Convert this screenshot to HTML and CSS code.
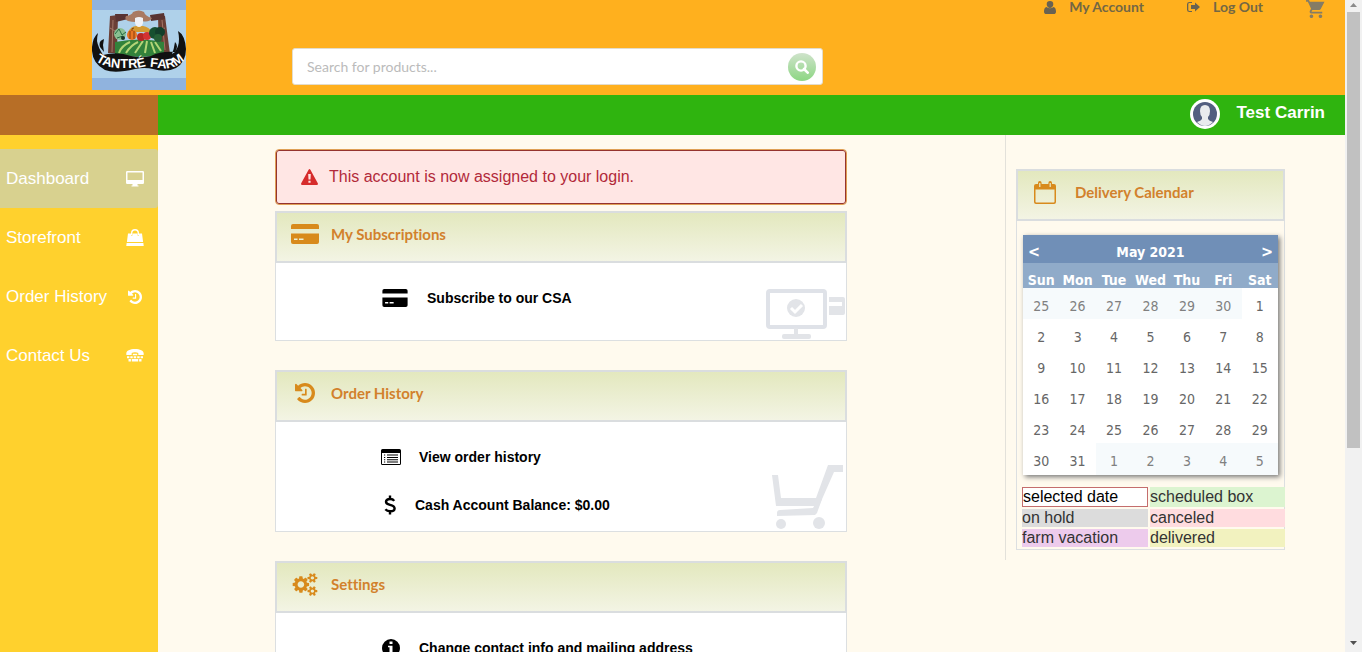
FILE: index.html
```html
<!DOCTYPE html>
<html lang="en">
<head>
	<meta charset="utf-8">
	<title>Tantre Farm - Dashboard</title>
	<link rel="stylesheet" href="styles.css">
</head>
<body>
	<svg class="sprite" aria-hidden="true">
		<symbol id="i-user" viewBox="0 0 12 13"><path d="M6 0a3.300 3.300 0 0 1 3.300 3.300C9.300 5.300 7.900 7 6 7S2.700 5.300 2.700 3.300A3.300 3.300 0 0 1 6 0zM2.600 6a4.900 4.900 0 0 0 6.800 0C11.300 6.300 12 8.300 12 10.700 12 12.200 11 13 9.700 13H2.300C1 13 0 12.200 0 10.700 0 8.300.7 6.300 2.600 6z"/></symbol>
		<symbol id="i-logout" viewBox="0 0 13 12"><path d="M5 1v1H2.500Q1.300 2 1.300 3.200v5.600Q1.300 10 2.500 10H5v1H2.500Q0 11 0 8.800V3.200Q0 1 2.500 1zM8 1.500 13 6 8 10.500V8H4V4h4z"/></symbol>
		<symbol id="i-cart" viewBox="1 2 21 20"><path d="M7 18c-1.100 0-1.990.9-1.990 2S5.900 22 7 22s2-.9 2-2-.9-2-2-2zM1 2v2h2l3.600 7.590-1.350 2.450c-.16.28-.25.61-.25.96 0 1.100.9 2 2 2h12v-2H7.420c-.14 0-.25-.11-.25-.25l.03-.12.9-1.630h7.450c.75 0 1.410-.41 1.750-1.030L21.500 4H5.210l-.94-2H1zm16 16c-1.100 0-1.990.9-1.990 2s.89 2 1.990 2 2-.9 2-2-.9-2-2-2z"/></symbol>
		<symbol id="i-search" viewBox="0 0 14 14"><path d="m9 9 3.700 3.700" stroke="#fff" stroke-width="2.600" stroke-linecap="round"/><circle cx="6" cy="6" r="4.600" fill="none" stroke="#fff" stroke-width="2.400"/></symbol>
		<symbol id="i-desktop" viewBox="0 0 18 16"><path fill-rule="evenodd" d="M1.200 0h15.600Q18 0 18 1.200v10.600q0 1.200-1.200 1.200H11.500v1.400h1V15.500h-7V14.400h1V13H1.200Q0 13 0 11.800V1.200Q0 0 1.200 0zM1.500 1.500v7.500h15V1.500z"/></symbol>
		<symbol id="i-bag" viewBox="0 0 18 17"><path d="M5.700 6V4a3.300 3.300 0 0 1 6.600 0v2" fill="none" stroke="#fff" stroke-width="1.400"/><path d="M2 4.500h3v2h1.500v-2h5v2H13v-2h3l1.100 8.500H.9zM.6 14h16.800l.3 3H.3z"/></symbol>
		<symbol id="i-history" viewBox="0 128 1536 1536"><path d="M1536 896q0 156-61 298t-164 245-245 164-298 61q-172 0-327-72.500t-264-204.500q-7-10-6.500-22.500t8.500-20.500l137-138q10-9 25-9 16 2 23 12 73 95 179 147t225 52q104 0 198.500-40.500t163.500-109.500 109.500-163.500 40.500-198.500-40.500-198.500-109.500-163.500-163.500-109.500-198.500-40.500q-98 0-188 35.500t-160 101.500l137 138q31 30 14 69-17 40-59 40h-448q-26 0-45-19t-19-45v-448q0-42 40-59 39-17 69 14l130 129q107-101 244.500-156.500t284.500-55.500q156 0 298 61t245 164 164 245 61 298zM896 608v448q0 14-9 23t-23 9h-320q-14 0-23-9t-9-23v-64q0-14 9-23t23-9h224v-352q0-14 9-23t23-9h64q14 0 23 9t9 23z"/></symbol>
		<symbol id="i-tty" viewBox="0 0 18 13"><path d="M.3 4.500C.3 1.500 4 0 9 0s8.700 1.500 8.700 4.500v1q0 .6-.7.600h-4q-.7 0-.7-.7V4Q11 3.300 9 3.300T5.700 4v1.400q0 .7-.7.700H1Q.3 6.100.3 5.500z"/><path d="M1 7.200h2.400v2H1zm3.300 0h2.400v2H4.300zm3.400 0h2.500v2H7.700zm3.500 0h2.500v2h-2.500zm3.400 0H17v2h-2.400zM2.500 10h2.400v2.600H2.500zm3.300 0h6.400v2.600H5.800zm7.300 0h2.400v2.600h-2.400zM6.800 4.700h4.400v1.500H6.800z"/></symbol>
		<symbol id="i-warning" viewBox="0 0 17 16"><path fill-rule="evenodd" d="M7.600.7q.9-1.200 1.800 0l7.400 13.500q.6 1.500-1 1.800H1.200q-1.600-.3-1-1.800zM7.200 5l.3 5.500h2L9.800 5zM7.400 11.700v2.100h2.200v-2.100z"/></symbol>
		<symbol id="i-card" viewBox="0 0 28 20"><path fill-rule="evenodd" d="M2 0h24q2 0 2 2v3H0V2q0-2 2-2zM0 9.500h28V18q0 2-2 2H2q-2 0-2-2zM3 14.500V16h3.500v-1.500zm5 0V16h4.500v-1.500z"/></symbol>
		<symbol id="i-list" viewBox="0 0 20 16"><path fill-rule="evenodd" d="M1.500 0h17Q20 0 20 1.500v13q0 1.500-1.500 1.500h-17Q0 16 0 14.500v-13Q0 0 1.500 0zM1 4v11h18V4z"/><path d="M3 5.500h1.200v1H3zm3 0h11v1H6zM3 8h1.200v1H3zm3 0h11v1H6zM3 10.300h1.200v1H3zm3 0h11v1H6zM3 12.600h1.200v1H3zm3 0h11v1H6z"/></symbol>
		<symbol id="i-dollar" viewBox="0 0 16 20"><path d="M13.200 5.800Q12 4 9 4 5 4 5 6.700q0 2.200 4 3.100 4.600 1 4.600 3.600T9.200 16.300q-3.200 0-4.800-2M9 .5V4M9 16v3.500" fill="none" stroke="#000" stroke-width="2.400"/></symbol>
		<symbol id="i-info" viewBox="0 0 18 18"><path fill-rule="evenodd" d="M9 0a9 9 0 1 1 0 18A9 9 0 0 1 9 0zM7.500 2.500v2.600h3V2.500zM6 6.700v1.600h1.500v4.800H6v1.700h6v-1.700h-1.500V6.700z"/></symbol>
		<symbol id="i-cogs" viewBox="0 0 1920 1792"><path d="M896 896q0-106-75-181t-181-75-181 75-75 181 75 181 181 75 181-75 75-181zM1664 1408q0-52-38-90t-90-38-90 38-38 90q0 53 37.500 90.500t90.500 37.500 90.500-37.500 37.500-90.500zM1664 384q0-52-38-90t-90-38-90 38-38 90q0 53 37.500 90.500t90.500 37.500 90.500-37.500 37.500-90.500zM1280 805v185q0 10-7 19.500t-16 10.500l-155 24q-11 35-32 76 34 48 90 115 7 11 7 20 0 12-7 19-23 30-82.500 89.500t-78.500 59.500q-11 0-21-7l-115-90q-37 19-77 31-11 108-23 155-7 24-30 24h-186q-11 0-20-7.500t-10-17.500l-23-153q-34-10-75-31l-118 89q-7 7-20 7-11 0-21-8-144-133-144-160 0-9 7-19 10-14 41-53t47-61q-23-44-35-82l-152-24q-10-1-17-9.500t-7-19.500v-185q0-10 7-19.500t16-10.500l155-24q11-35 32-76-34-48-90-115-7-11-7-20 0-12 7-20 22-30 82-89t79-59q11 0 21 7l115 90q34-18 77-32 11-108 23-154 7-24 30-24h186q11 0 20 7.500t10 17.500l23 153q34 10 75 31l118-89q8-7 20-7 11 0 21 8 144 133 144 160 0 8-7 19-12 16-42 54t-45 60q23 48 34 82l152 23q10 2 17 10.500t7 19.500zM1920 1338v140q0 16-149 31-12 27-30 52 51 113 51 138 0 4-4 7-122 71-124 71-8 0-46-47t-52-68q-20 2-30 2t-30-2q-14 21-52 68t-46 47q-2 0-124-71-4-3-4-7 0-25 51-138-18-25-30-52-149-15-149-31v-140q0-16 149-31 13-29 30-52-51-113-51-138 0-4 4-7 4-2 35-20t59-34 30-16q8 0 46 46.500t52 67.500q20-2 30-2t30 2q51-71 92-112l6-2q4 0 124 70 4 3 4 7 0 25-51 138 17 23 30 52 149 15 149 31zM1920 314v140q0 16-149 31-12 27-30 52 51 113 51 138 0 4-4 7-122 71-124 71-8 0-46-47t-52-68q-20 2-30 2t-30-2q-14 21-52 68t-46 47q-2 0-124-71-4-3-4-7 0-25 51-138-18-25-30-52-149-15-149-31v-140q0-16 149-31 13-29 30-52-51-113-51-138 0-4 4-7 4-2 35-20t59-34 30-16q8 0 46 46.500t52 67.500q20-2 30-2t30 2q51-71 92-112l6-2q4 0 124 70 4 3 4 7 0 25-51 138 17 23 30 52 149 15 149 31z"/></symbol>
		<symbol id="i-calendar" viewBox="0 0 22 23"><path fill-rule="evenodd" d="M2 3h2V2q0-2 1.800-2T7.600 2v1h6.800V2q0-2 1.800-2T18 2v1h2q2 0 2 2v16q0 2-2 2H2q-2 0-2-2V5q0-2 2-2zM1.500 8.500v12.300q0 .8.800.8h17.400q.8 0 .8-.8V8.500zM5.200 2v4h1.200V2zm10.400 0v4h1.200V2z"/></symbol>
	</svg>

	<div class="page">
		<header class="header">
			<a href="#" class="logo">
				<svg viewBox="0 0 94 90" role="img" aria-label="Tantre Farm">
					<rect width="94" height="90" fill="#90b3de"/>
					<rect y="10" width="94" height="68" fill="#afd1ea"/>
					<path d="m18 16 8-1-1 38h-9zM66 16h7l5 38H67z" fill="#6b3f35"/>
					<path d="M23 14h13v5l-12 3zM58 15l14-2 1 6-14 2z" fill="#593431"/>
					<path d="m21 20-1 32M70 20l3 30M18 28l5 3M68 30l5-2" stroke="#a37667" fill="none"/>
					<path d="M34 16q6-1 7-4 6-3 11 0 1 4 8 6-3 5-10 3-6 2-14 0-4-2-2-5z" fill="#a97a61"/>
					<path d="M36 32q3-6 8-6h7q6 1 9 6z" fill="#d39b32"/>
					<path d="M43 18q4-2 8 0v5q-1 4-4 4t-4-4z" fill="#f1f2f5"/>
					<path d="M23 54V42q25-5 49 0v12q-23 6-49 0z" fill="#32823b"/>
					<path d="M27 53q2-7 11-11M34 53q5-8 12-11M43 53q4-6 8-12M53 53l2-12M63 53l-4-11M69 51l-6-9" fill="none" stroke="#b3d477" stroke-width="2"/>
					<circle cx="28" cy="34" r="6" fill="#8abf91"/><path d="m23 34 4-5 3 6 4-3M25 38l6-2" fill="none" stroke="#266a42"/>
					<circle cx="31" cy="38" r="2" fill="#173526"/>
					<ellipse cx="40" cy="35" rx="5" ry="5" fill="#e87522"/><path d="M38 31v8m4-8v8M40 31q-1-3 2-3" stroke="#87400f" fill="none"/>
					<circle cx="49" cy="37" r="4" fill="#b62824"/><circle cx="55" cy="36" r="4" fill="#d33332"/>
					<circle cx="63" cy="33" r="6" fill="#175030"/><circle cx="68" cy="32" r="5" fill="#123e2b"/><circle cx="66" cy="38" r="4" fill="#255f37"/>
					<path d="M6 33Q1 37 0 47q-1 16 13 23 10 4 30-1 10-2 18 0 13 4 23-1 10-6 10-19-1-14-8-18 3 13-3 21-14-1-24 4-10 2-20 0-14-5-28-1Q6 47 5 41q0-4 1-8zM12 39q-6 2-4 8l4 5-1-7zM83 42q4 4 0 10l-3 2q2-5 3-12z" fill="#111"/>
					<path id="banner" d="M4 61Q14 68 30 68T50 67T68 68T92 60" fill="none"/>
					<text class="logo-text"><textPath href="#banner" startOffset="50%" text-anchor="middle">TANTRÉ FARM</textPath></text>
				</svg>
			</a>
			<form class="search">
				<input type="text" placeholder="Search for products..." aria-label="Search for products">
				<button type="button" aria-label="Search"><svg width="14" height="14"><use href="#i-search"/></svg></button>
			</form>
			<nav class="top-links">
				<a href="#"><svg width="12" height="13"><use href="#i-user"/></svg>My Account</a>
				<a href="#"><svg width="13" height="12"><use href="#i-logout"/></svg>Log Out</a>
				<a href="#" class="cart" aria-label="Cart"><svg width="19" height="18"><use href="#i-cart"/></svg></a>
			</nav>
		</header>

		<div class="user-bar">
			<div class="corner"></div>
			<svg class="avatar" viewBox="0 0 30 30">
				<circle cx="15" cy="15" r="15" fill="#fff"/>
				<circle cx="15" cy="15" r="12" fill="#535f80"/>
				<path d="M15 6q5 0 5 6 0 4-2 6v2q1 2 5 3-4 4-8 4t-8-4q4-1 5-3v-2q-2-2-2-6 0-6 5-6z" fill="#e9ebee"/>
			</svg>
			<span class="user-name">Test Carrin</span>
		</div>

		<div class="content">
			<nav class="sidebar">
				<a href="#" class="active">Dashboard<svg width="18" height="16"><use href="#i-desktop"/></svg></a>
				<a href="#">Storefront<svg width="18" height="17"><use href="#i-bag"/></svg></a>
				<a href="#">Order History<svg width="18" height="14"><use href="#i-history"/></svg></a>
				<a href="#">Contact Us<svg width="18" height="13"><use href="#i-tty"/></svg></a>
			</nav>

			<main class="main">
				<div class="alert" role="alert"><svg width="17" height="16"><use href="#i-warning"/></svg>This account is now assigned to your login.</div>

				<section class="card">
					<h2><svg width="28" height="20"><use href="#i-card"/></svg>My Subscriptions</h2>
					<ul>
						<li><a href="#"><svg width="28" height="18"><use href="#i-card"/></svg>Subscribe to our CSA</a></li>
					</ul>
					<svg class="mark" width="80" height="52" viewBox="0 0 80 52">
						<rect x="2" y="3" width="57" height="36" rx="2" fill="none" stroke="#dfe2e8" stroke-width="4"/>
						<path d="M28 40h4v6h-4z"/><rect x="16" y="46" width="29" height="5" rx="2"/>
						<circle cx="30" cy="20" r="9"/><path d="m25 20 4 4 7-7" fill="none" stroke="#fff" stroke-width="3"/>
						<path d="M63 9h14q2 0 2 2v14q0 2-2 2H63v-9h13v-4H63z"/>
					</svg>
				</section>

				<section class="card">
					<h2><svg width="28" height="20"><use href="#i-history"/></svg>Order History</h2>
					<ul>
						<li><a href="#"><svg width="20" height="16"><use href="#i-list"/></svg>View order history</a></li>
						<li><a href="#"><svg width="16" height="20"><use href="#i-dollar"/></svg>Cash Account Balance: $0.00</a></li>
					</ul>
					<svg class="mark" width="74" height="68" viewBox="0 0 74 68">
						<path d="M0 12h6l3 23h35L56 2h15v7H62L47 43H4z"/><path d="M5 50q0-3 3-3l33-2 5-9h4l-5 14-2 2-38 1z"/>
						<circle cx="9" cy="61" r="5"/><circle cx="47" cy="60" r="6"/>
					</svg>
				</section>

				<section class="card settings">
					<h2><svg width="28" height="23"><use href="#i-cogs"/></svg>Settings</h2>
					<ul>
						<li><a href="#"><svg width="20" height="18"><use href="#i-info"/></svg>Change contact info and mailing address</a></li>
					</ul>
					<svg class="mark" width="60" height="48" viewBox="0 0 60 48">
						<path d="M0 7 9 3q3 0 5 4l2 3h8l3-3q2-4 4-4l9 4v14H0z"/>
					</svg>
				</section>
			</main>

			<aside class="aside">
				<section class="card calendar-card">
					<h2><svg width="22" height="23"><use href="#i-calendar"/></svg>Delivery Calendar</h2>
					<table class="calendar">
						<thead>
							<tr class="month"><td><button type="button" aria-label="Previous month">&lt;</button></td><th colspan="5">May 2021</th><td><button type="button" aria-label="Next month">&gt;</button></td></tr>
							<tr class="days"><th>Sun</th><th>Mon</th><th>Tue</th><th>Wed</th><th>Thu</th><th>Fri</th><th>Sat</th></tr>
						</thead>
						<tbody>
							<tr><td class="other">25</td><td class="other">26</td><td class="other">27</td><td class="other">28</td><td class="other">29</td><td class="other">30</td><td>1</td></tr>
							<tr><td>2</td><td>3</td><td>4</td><td>5</td><td>6</td><td>7</td><td>8</td></tr>
							<tr><td>9</td><td>10</td><td>11</td><td>12</td><td>13</td><td>14</td><td>15</td></tr>
							<tr><td>16</td><td>17</td><td>18</td><td>19</td><td>20</td><td>21</td><td>22</td></tr>
							<tr><td>23</td><td>24</td><td>25</td><td>26</td><td>27</td><td>28</td><td>29</td></tr>
							<tr><td>30</td><td>31</td><td class="other">1</td><td class="other">2</td><td class="other">3</td><td class="other">4</td><td class="other">5</td></tr>
						</tbody>
					</table>
					<div class="legend">
						<span class="selected">selected date</span><span class="scheduled">scheduled box</span>
						<span class="hold">on hold</span><span class="canceled">canceled</span>
						<span class="vacation">farm vacation</span><span class="delivered">delivered</span>
					</div>
				</section>
			</aside>
		</div>
	</div>

	<div class="scrollbar">
		<svg width="17" height="12"><path d="M5 7h7L8.500 3z" fill="#8b8b8b"/></svg>
		<div class="track"><div class="thumb"></div></div>
		<svg width="17" height="17"><path d="M5 6h7l-3.500 4z" fill="#505050"/></svg>
	</div>
</body>
</html>
```
FILE: styles.css
```css
*{
	box-sizing: border-box;
	margin: 0;
	padding: 0;
}

body{
	display: flex;
	height: 100vh;
	overflow: hidden;
	background-color: #fffaee;
	font: normal 16px "Liberation Sans", Arial, sans-serif;
	color: #333;
}

a{
	color: inherit;
	text-decoration: none;
}

button{
	border: 0;
	background: none;
	font: inherit;
	color: inherit;
	cursor: pointer;
}

svg{
	flex: none;
	fill: currentColor;
}

.sprite{
	display: none;
}

.page{
	display: flex;
	flex-direction: column;
	flex: 1;
	min-width: 0;
}

/* header */
.header{
	display: flex;
	flex: none;
	align-items: flex-start;
	height: 95px;
	padding: 0 20px 0 92px;
	background-color: #ffb01e;
}

.logo svg{
	display: block;
	width: 94px;
	height: 90px;
}

.logo-text{
	font: bold 13px "Liberation Sans Narrow", "Liberation Sans", sans-serif;
	fill: #fff;
}

.search{
	display: flex;
	align-items: center;
	flex: 0 1 531px;
	height: 37px;
	margin: 48px 0 0 106px;
	padding-right: 6px;
	border: 1px solid #e3dccb;
	border-radius: 3px;
	background-color: #fff;
}

.search input{
	flex: 1;
	min-width: 0;
	padding: 0 14px;
	border: 0;
	outline: none;
	background: none;
	font: normal 14px Lato, sans-serif;
}

.search input::placeholder{
	color: #bbb;
}

.search button{
	display: flex;
	align-items: center;
	justify-content: center;
	width: 28px;
	height: 28px;
	border-radius: 50%;
	background: linear-gradient(#cfe3cb, #8dd683);
}

.top-links{
	display: flex;
	margin-left: auto;
	gap: 43px;
	font: bold 14px/14px Lato, sans-serif;
	color: #736744;
}

.top-links a{
	display: flex;
	align-items: center;
	gap: 13px;
	height: 14px;
}

.top-links svg{
	fill: #686252;
}

.top-links .cart{
	height: 17px;
}

.top-links .cart svg{
	fill: #857c65;
}

.user-bar{
	display: flex;
	flex: none;
	align-items: center;
	height: 40px;
	padding-right: 20px;
	background-color: #2fb40f;
}

.corner{
	width: 158px;
	height: 100%;
	margin-right: auto;
	background-color: #b76e26;
}

.avatar{
	width: 30px;
	height: 30px;
	margin-bottom: 2px;
}

.user-name{
	margin-left: 17px;
	padding-bottom: 4px;
	font-size: 17px;
	font-weight: bold;
	color: #fff;
}

/* sidebar */
.content{
	display: flex;
	flex: 1;
	min-height: 0;
}

.sidebar{
	flex: none;
	width: 158px;
	padding-top: 14px;
	background-color: #ffd12d;
}

.sidebar a{
	display: flex;
	align-items: center;
	justify-content: space-between;
	height: 59px;
	padding: 0 14px 0 6px;
	border-radius: 0 3px 3px 0;
	font-size: 17px;
	color: #fff;
}

.sidebar .active{
	background-color: #d8d18f;
}

/* dashboard */
.main{
	flex: 1;
	min-width: 0;
	padding: 14px 158px 0 117px;
}

.alert{
	display: flex;
	align-items: center;
	gap: 11px;
	height: 56px;
	margin-bottom: 6px;
	padding: 0 25px;
	border: 1px solid #dfa056;
	border-radius: 4px;
	background-color: #ffe6e4;
	box-shadow: inset 0 0 0 1px #95342f;
	color: #b22a3a;
}

.alert svg{
	fill: #d62c2c;
}

.card{
	position: relative;
	min-height: 130px;
	margin-bottom: 29px;
	border: 1px solid #dcdfe1;
	border-top: 0;
	background-color: #fff;
}

.card h2{
	display: flex;
	align-items: center;
	gap: 12px;
	height: 52px;
	margin: 0 -1px;
	padding: 0 14px 6px;
	border: 2px solid #dadddf;
	background: linear-gradient(#e3e8be, #f3f4e4);
	font: bold 15px Lato, sans-serif;
	font-variant-ligatures: none;
	color: #d2812c;
}

.card h2 svg{
	fill: #d88a1c;
}

.card ul{
	padding: 11px 0 2px 105px;
	list-style: none;
}

.card li a{
	display: flex;
	align-items: center;
	gap: 18px;
	height: 48px;
	font-size: 14px;
	font-weight: bold;
	color: #000;
}

.mark{
	position: absolute;
	right: 0;
	bottom: 0;
	fill: #e2e4e8;
}

.settings .mark{
	bottom: -20px;
}

/* calendar */
.aside{
	flex: none;
	align-self: flex-start;
	width: 340px;
	padding: 34px 60px 10px 10px;
	border-left: 1px solid #e3e1da;
}

.calendar-card{
	margin: 0;
	padding-bottom: 2px;
	background: none;
}

.calendar-card h2{
	gap: 19px;
	padding-left: 16px;
}

.calendar{
	width: 255px;
	margin: 14px 6px 12px;
	border-collapse: collapse;
	table-layout: fixed;
	background-color: #fff;
	box-shadow: 2px 2px 5px #777;
	font: normal 14px "DejaVu Sans Condensed", "Noto Sans", sans-serif;
	color: #666;
	text-align: center;
}

.calendar td{
	height: 31px;
	padding-top: 4px;
}

.calendar tr:last-child td{
	height: 32px;
}

.calendar .other{
	background-color: #f6fafc;
	color: #808080;
}

.calendar .month{
	background-color: #708fb7;
	color: #fff;
}

.calendar .month th, .calendar .month td{
	height: 28px;
	padding-top: 6px;
	font-weight: bold;
	line-height: 16px;
}

.calendar .month button{
	font-size: 16px;
}

.calendar .month td:first-child{
	padding-left: 5px;
	text-align: left;
}

.calendar .month td:last-child{
	padding-right: 5px;
	text-align: right;
}

.calendar .days{
	background-color: #90abc9;
	color: #fff;
}

.calendar .days th{
	height: 25px;
	padding-top: 9px;
	line-height: 16px;
}

.legend{
	display: grid;
	grid-template-columns: 126px 1fr;
	gap: 2px;
	margin: 0 -1px 0 5px;
	line-height: 18px;
}

.selected{
	border: 1px solid #c46d6d;
	background-color: #fff;
	color: #000;
}

.scheduled{
	padding-top: 1px;
	background-color: #dcf4d0;
}

.hold{
	background-color: #dcdcdc;
}

.canceled{
	background-color: #ffdcdf;
}

.vacation{
	background-color: #edcbec;
}

.delivered{
	background-color: #f2f2bf;
}

/* scrollbar strip */
.scrollbar{
	display: flex;
	flex-direction: column;
	flex: none;
	width: 17px;
	background-color: #f1f1f1;
}

.track{
	flex: 1;
	padding: 0 2px;
}

.thumb{
	height: 70%;
	background-color: #c1c1c1;
}
```
